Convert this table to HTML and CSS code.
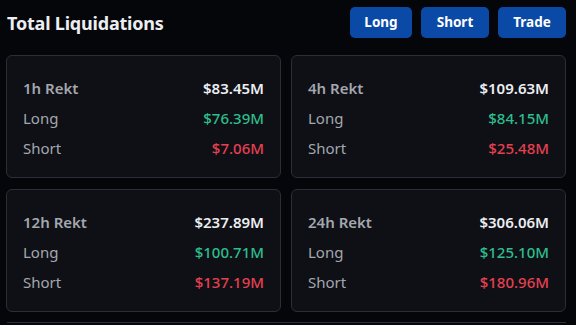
FILE: index.html
```html
<!DOCTYPE html>
<html>
<head>
<meta charset="utf-8">
<link rel="stylesheet" href="styles.css">
</head>
<body>
<div class="page">
  <header class="head">
    <h1 class="title">Total Liquidations</h1>
    <div class="actions">
      <button class="btn btn-long">Long</button>
      <button class="btn btn-short">Short</button>
      <button class="btn btn-trade">Trade</button>
    </div>
  </header>
  <div class="grid">
    <div class="card">
      <div class="row"><span class="label strong">1h Rekt</span><span class="val total">$83.45M</span></div>
      <div class="row"><span class="label">Long</span><span class="val up">$76.39M</span></div>
      <div class="row"><span class="label">Short</span><span class="val down">$7.06M</span></div>
    </div>
    <div class="card">
      <div class="row"><span class="label strong">4h Rekt</span><span class="val total">$109.63M</span></div>
      <div class="row"><span class="label">Long</span><span class="val up">$84.15M</span></div>
      <div class="row"><span class="label">Short</span><span class="val down">$25.48M</span></div>
    </div>
    <div class="card">
      <div class="row"><span class="label strong">12h Rekt</span><span class="val total">$237.89M</span></div>
      <div class="row"><span class="label">Long</span><span class="val up">$100.71M</span></div>
      <div class="row"><span class="label">Short</span><span class="val down">$137.19M</span></div>
    </div>
    <div class="card">
      <div class="row"><span class="label strong">24h Rekt</span><span class="val total">$306.06M</span></div>
      <div class="row"><span class="label">Long</span><span class="val up">$125.10M</span></div>
      <div class="row"><span class="label">Short</span><span class="val down">$180.96M</span></div>
    </div>
  </div>
  <div class="next"></div>
</div>
</body>
</html>
```

FILE: styles.css
```css
html, body {
  margin: 0;
  padding: 0;
  background: #05060a;
  height: 100%;
  overflow: hidden;
}
.page {
  padding: 0 10px 0 6px;
  font-family: "Noto Sans", "Open Sans", sans-serif;
  color: #e8e9ec;
}
.head {
  display: flex;
  align-items: center;
  justify-content: space-between;
  height: 46px;
  padding-left: 1px;
}
.title {
  margin: 0;
  font-size: 18px;
  font-weight: 700;
  color: #eceef1;
  letter-spacing: -0.2px;
}
.actions {
  display: flex;
  gap: 9px;
  align-items: center;
}
.btn {
  height: 31px;
  border: none;
  border-radius: 5px;
  background: #0a49a6;
  color: #ffffff;
  font-family: "Noto Sans", sans-serif;
  font-weight: 700;
  font-size: 13.5px;
  padding: 0;
  position: relative;
  top: -1px;
}
.btn-long { width: 62px; }
.btn-short { width: 68px; }
.btn-trade { width: 68px; }
.grid {
  margin-top: 9px;
  display: grid;
  grid-template-columns: 275px 275px;
  column-gap: 10px;
  row-gap: 11px;
}
.card {
  height: 123px;
  box-sizing: border-box;
  border: 1px solid #2b2e36;
  border-radius: 6px;
  background: #0e1016;
  padding: 17px 16px 16px 16px;
}
.row {
  display: flex;
  justify-content: space-between;
  align-items: center;
  height: 30px;
  font-size: 15px;
}
.label {
  color: #a4a7ae;
}
.label.strong {
  font-weight: 600;
}
.val {
  font-weight: 500;
}
.val.total {
  color: #eceef1;
  font-weight: 600;
}
.val.up { color: #2ebd8c; }
.val.down { color: #e5404f; }
.next {
  margin: 10px 0 0 1px;
  height: 0;
  border-top: 1px solid #2b2e36;
}
```
